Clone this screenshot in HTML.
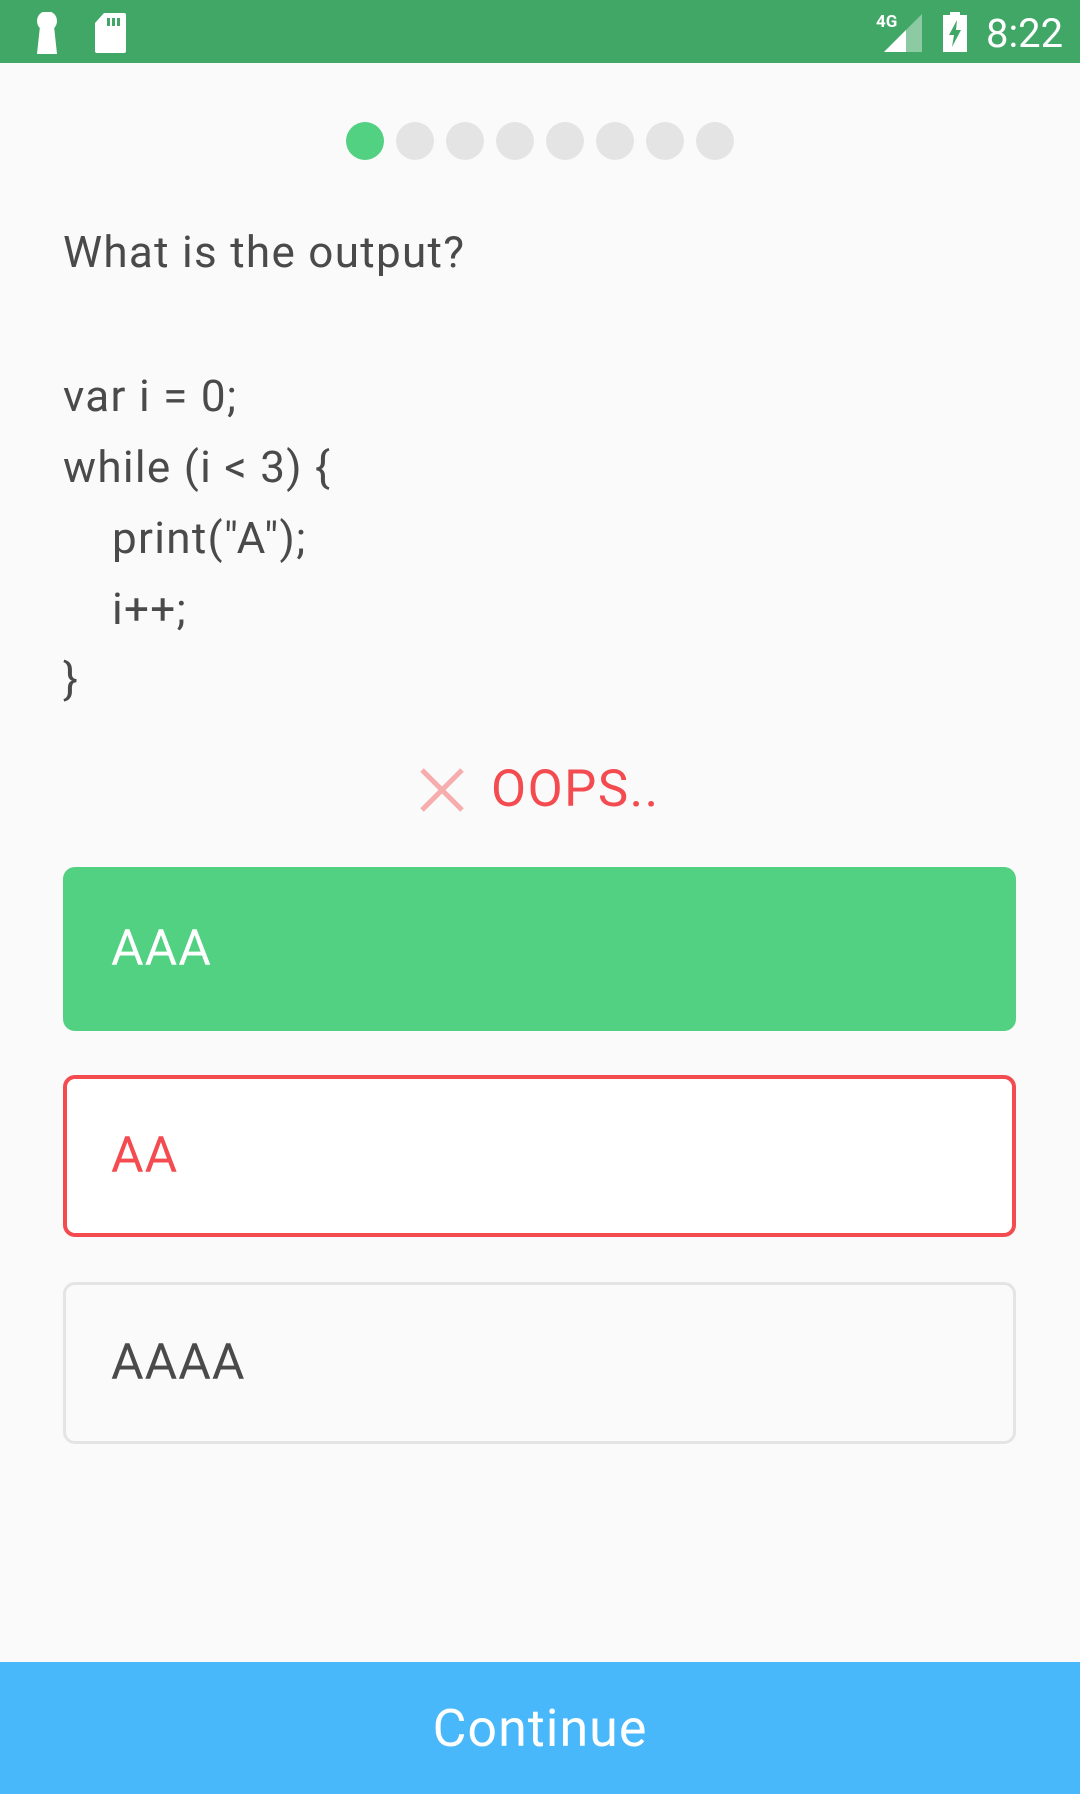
<!DOCTYPE html>
<html><head><meta charset="utf-8"><style>
*{margin:0;padding:0;box-sizing:border-box}
body{width:1080px;height:1794px;background:#fafafa;font-family:"Roboto","Liberation Sans",sans-serif;position:relative;overflow:hidden;color:#4a4a4a}
.sb{position:absolute;left:0;top:0;width:1080px;height:63px;background:#41a766}
.a{position:absolute}
.dot{position:absolute;top:122px;width:38px;height:38px;border-radius:50%;background:#e4e4e4}
.t{position:absolute;left:63px;font-size:44px;letter-spacing:1.3px;line-height:48px;white-space:nowrap}
.btn{position:absolute;left:63px;width:953px;border-radius:12px;font-size:50px;letter-spacing:1px;padding-left:48px;display:flex;align-items:center}
</style></head><body>
<div class="sb">
 <svg class="a" style="left:34px;top:12px" width="26" height="42" viewBox="0 0 26 42"><ellipse cx="13" cy="9" rx="10" ry="10" fill="#fff"/><polygon points="6,14 20,14 23,42 3,42" fill="#fff"/></svg>
 <svg class="a" style="left:94px;top:13px" width="32" height="40" viewBox="0 0 32 40"><path d="M10 0H30Q32 0 32 2V38Q32 40 30 40H3Q1 40 1 38V10Z" fill="#fff"/><rect x="13" y="5" width="3" height="8" fill="#41a766"/><rect x="18" y="5" width="3" height="8" fill="#41a766"/><rect x="23" y="5" width="3" height="8" fill="#41a766"/></svg>
 <div class="a" style="left:876px;top:12px;font-size:17px;color:#fff;font-weight:bold">4G</div>
 <svg class="a" style="left:884px;top:14px" width="38" height="38" viewBox="0 0 38 38"><polygon points="38,0 38,38 0,38" fill="#8ccaa3"/><polygon points="22,16 22,38 0,38 22,16" fill="#fff"/></svg>
 <svg class="a" style="left:943px;top:12px" width="24" height="40" viewBox="0 0 24 40"><rect x="7" y="0" width="10" height="4" fill="#fff"/><rect x="0" y="3" width="24" height="37" fill="#fff"/><polygon points="14,8 6,23 11,23 9,35 18,18 13,18" fill="#41a766"/></svg>
 <div class="a" style="left:986px;top:10px;font-size:40px;color:#fff">8:22</div>
</div>
<div class="dot" style="left:346px;background:#52d182"></div>
<div class="dot" style="left:396px"></div><div class="dot" style="left:446px"></div><div class="dot" style="left:496px"></div><div class="dot" style="left:546px"></div><div class="dot" style="left:596px"></div><div class="dot" style="left:646px"></div><div class="dot" style="left:696px"></div>
<div class="t" style="top:228px">What is the output?</div>
<div class="t" style="top:372px">var i = 0;</div>
<div class="t" style="top:443px">while (i &lt; 3) {</div>
<div class="t" style="top:514px;left:112px">print("A");</div>
<div class="t" style="top:585px;left:112px">i++;</div>
<div class="t" style="top:655px">}</div>
<svg class="a" style="left:418px;top:766px" width="48" height="48" viewBox="0 0 48 48"><path d="M4 4L44 44M44 4L4 44" stroke="#f7adad" stroke-width="5"/></svg>
<div class="a" style="left:491px;top:760px;font-size:51px;letter-spacing:1.5px;color:#f34b4f">OOPS..</div>
<div class="btn" style="top:867px;height:164px;background:#52d182;color:#fff">AAA</div>
<div class="btn" style="top:1075px;height:162px;background:#fff;border:4px solid #f34b4f;color:#f34b4f;padding-left:44px">AA</div>
<div class="btn" style="top:1282px;height:162px;background:#fafafa;border:3px solid #e4e4e4;color:#4a4a4a;padding-left:45px">AAAA</div>
<div class="a" style="left:0;top:1662px;width:1080px;height:132px;background:#48b8fb;color:#fff;font-size:52px;letter-spacing:1px;display:flex;align-items:center;justify-content:center">Continue</div>
</body></html>
